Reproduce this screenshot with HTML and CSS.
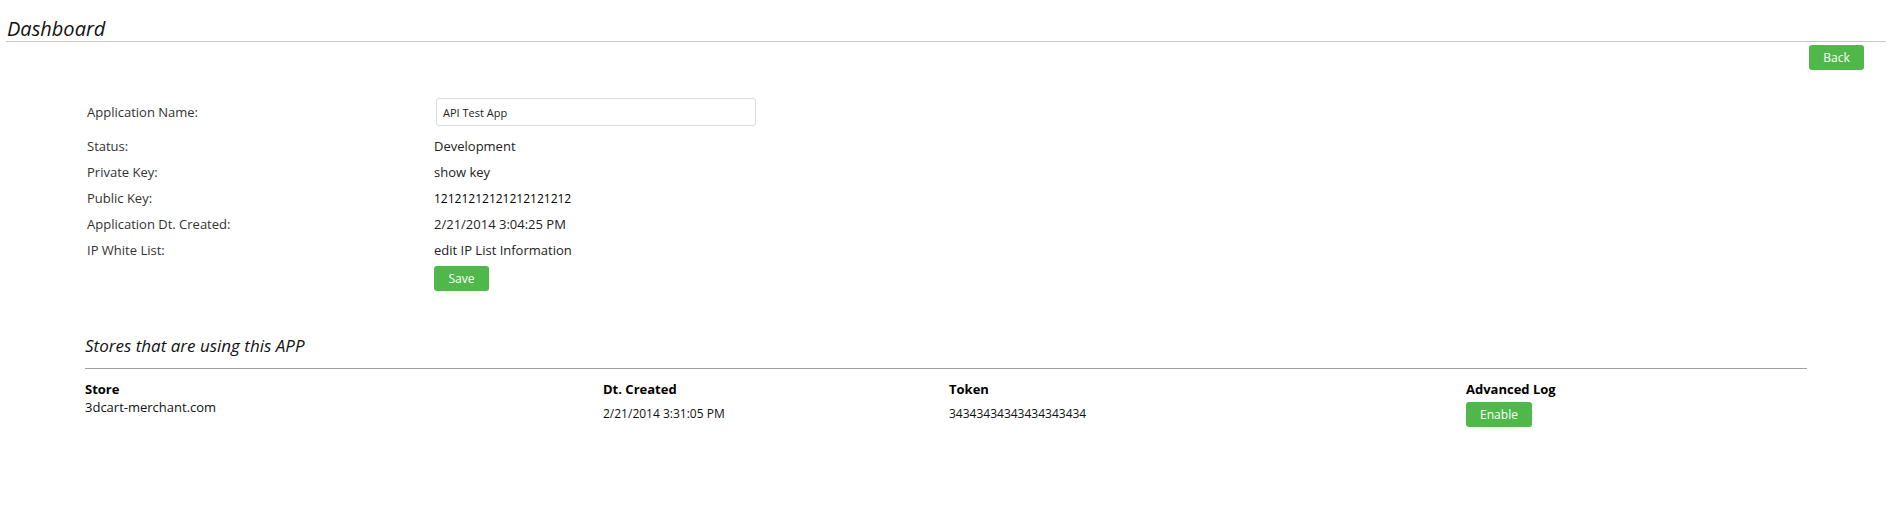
FILE: index.html
```html
<!DOCTYPE html>
<html lang="en">
<head>
    <meta charset="UTF-8">
    <title>Dashboard</title>
    <link rel="stylesheet" href="styles.css">
</head>
<body>
    <div class="page-head">
        <h1>Dashboard</h1>
    </div>
    <div class="top-actions">
        <button class="btn">Back</button>
    </div>

    <div class="app-form">
        <div class="form-row first">
            <div class="label">Application Name:</div>
            <div class="value"><input class="text-input" type="text" value="API Test App"></div>
        </div>
        <div class="form-row">
            <div class="label">Status:</div>
            <div class="value">Development</div>
        </div>
        <div class="form-row">
            <div class="label">Private Key:</div>
            <div class="value">show key</div>
        </div>
        <div class="form-row">
            <div class="label">Public Key:</div>
            <div class="value key">12121212121212121212</div>
        </div>
        <div class="form-row">
            <div class="label">Application Dt. Created:</div>
            <div class="value">2/21/2014 3:04:25 PM</div>
        </div>
        <div class="form-row">
            <div class="label">IP White List:</div>
            <div class="value">edit IP List Information</div>
        </div>
        <div class="form-row save-row">
            <div class="label"></div>
            <div class="value"><button class="btn">Save</button></div>
        </div>
    </div>

    <div class="stores">
        <h2>Stores that are using this APP</h2>
        <table class="stores-table">
            <tr>
                <th class="col-store">Store</th>
                <th class="col-date">Dt. Created</th>
                <th class="col-token">Token</th>
                <th>Advanced Log</th>
            </tr>
            <tr>
                <td class="store-name">3dcart-merchant.com</td>
                <td>2/21/2014 3:31:05 PM</td>
                <td>34343434343434343434</td>
                <td><button class="btn wide">Enable</button></td>
            </tr>
        </table>
    </div>
</body>
</html>
```

FILE: styles.css
```css
body {
    margin: 0;
    padding: 0;
    font-family: "Open Sans", "DejaVu Sans", sans-serif;
    font-size: 13px;
    color: #333333;
    background-color: #ffffff;
}

.page-head {
    margin: 0 5px 0 6px;
    padding: 0 0 0 1px;
    border-bottom: 1px solid #c6c6c6;
    height: 42px;
    box-sizing: border-box;
    display: flex;
    align-items: flex-end;
}

.page-head h1 {
    margin: 0 0 -1px 0;
    font-size: 20px;
    font-weight: normal;
    font-style: italic;
    line-height: 26px;
    color: #111111;
}

.top-actions {
    display: flex;
    justify-content: flex-end;
    padding: 3px 27px 0 0;
}

.btn {
    height: 25px;
    min-width: 55px;
    padding: 0 10px;
    border: none;
    border-radius: 3px;
    background-color: #50b84b;
    color: #ffffff;
    font-family: "Open Sans", "DejaVu Sans", sans-serif;
    font-size: 12px;
    cursor: pointer;
}

.btn.wide {
    min-width: 66px;
}

.app-form {
    padding: 28px 0 0 87px;
}

.form-row {
    display: flex;
    height: 26px;
    align-items: center;
}

.form-row.first {
    height: 28px;
    margin-bottom: 7px;
}

.form-row.save-row {
    height: 25px;
    margin-top: 3px;
}

.label {
    width: 347px;
    color: #333333;
}

.value {
    color: #222222;
}

.value.key {
    color: #000000;
    font-size: 12px;
}

.text-input {
    width: 320px;
    height: 28px;
    margin-left: 2px;
    box-sizing: border-box;
    border: 1px solid #dcdcdc;
    border-radius: 3px;
    padding: 0 6px;
    font-family: "Open Sans", "DejaVu Sans", sans-serif;
    font-size: 11px;
    color: #222222;
}

.stores {
    margin: 44px 84px 0 85px;
}

.stores h2 {
    margin: 0;
    padding-bottom: 11px;
    border-bottom: 1px solid #a0a0a0;
    font-size: 17px;
    font-weight: normal;
    font-style: italic;
    line-height: 22px;
    color: #111111;
}

.stores-table {
    width: 100%;
    margin-top: 11px;
    border-collapse: collapse;
}

.stores-table th {
    text-align: left;
    font-size: 13px;
    font-weight: bold;
    color: #000000;
    line-height: 18px;
    padding: 0;
}

.stores-table td {
    padding: 0;
    height: 32px;
    line-height: 18px;
    vertical-align: middle;
    color: #111111;
    font-size: 12px;
}

.stores-table td.store-name {
    vertical-align: top;
    font-size: 13px;
}

.col-store {
    width: 518px;
}

.col-date {
    width: 346px;
}

.col-token {
    width: 517px;
}
```
